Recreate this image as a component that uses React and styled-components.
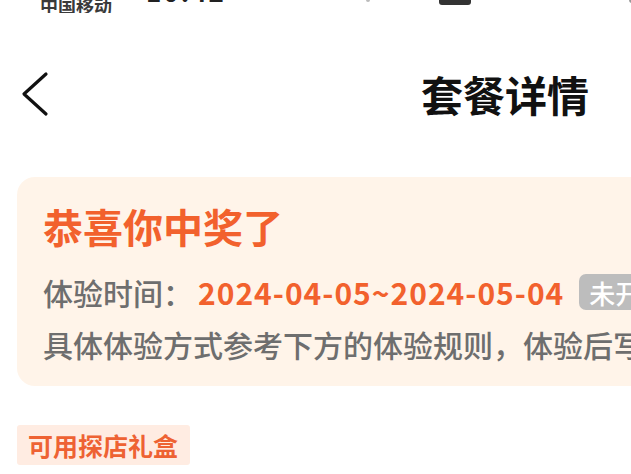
import React from "react";
import styled, { createGlobalStyle } from "styled-components";

const GlobalStyle = createGlobalStyle`
  html, body {
    margin: 0;
    padding: 0;
    background: #ffffff;
    overflow: hidden;
  }
  body {
    font-family: "Noto Sans CJK SC", "Noto Sans", sans-serif;
  }
`;

const Page = styled.div`
  width: 1010px;
  display: flex;
  flex-direction: column;
`;

const StatusBar = styled.div`
  height: 13px;
  overflow: hidden;
  display: flex;
  align-items: flex-end;
  padding-left: 40px;
`;

const Carrier = styled.span`
  font-size: 18px;
  line-height: 1;
  font-weight: 700;
  color: #3a3a3a;
  margin-bottom: -1px;
`;

const Clock = styled.span`
  font-size: 26px;
  line-height: 1;
  font-weight: 700;
  color: #222222;
  margin-left: 34px;
  padding-bottom: 9px;
  letter-spacing: 2px;
`;

const StatusIcon = styled.span`
  display: block;
  width: ${(p) => p.w}px;
  height: 20px;
  margin-left: ${(p) => p.gap}px;
  margin-bottom: ${(p) => p.lift}px;
  background: ${(p) => p.color};
  border-radius: 3px;
`;

const NavBar = styled.div`
  height: 162px;
  display: flex;
  align-items: center;
  padding-left: 20px;
`;

const BackButton = styled.div`
  width: 30px;
  height: 46px;
  display: flex;
  align-items: center;
`;

const NavTitle = styled.h1`
  flex: 1;
  margin: 0 50px 0 0;
  text-align: center;
  font-size: 42px;
  line-height: 1.2;
  font-weight: 700;
  color: #111111;
`;

const Card = styled.div`
  margin: 2px 17px 0;
  background: #fff4e9;
  border-radius: 18px;
  padding: 25px 26px 22px;
  display: flex;
  flex-direction: column;
`;

const CardTitle = styled.div`
  font-size: 40px;
  line-height: 48px;
  font-weight: 700;
  color: #f2612d;
`;

const InfoRow = styled.div`
  display: flex;
  align-items: center;
  height: 40px;
  margin-top: ${(p) => p.top}px;
  white-space: nowrap;
  font-size: 30px;
  font-weight: 500;
  color: #6e6e6e;
`;

const DateText = styled.span`
  margin-left: 5px;
  color: #f2612d;
  font-weight: 700;
  letter-spacing: 1px;
`;

const StatusBadge = styled.span`
  margin-left: 15px;
  height: 36px;
  display: flex;
  align-items: center;
  padding: 0 10px;
  background: #bdbdbd;
  border-radius: 7px;
  font-size: 26px;
  font-weight: 500;
  color: #ffffff;
`;

const Tag = styled.div`
  align-self: flex-start;
  margin: 39px 0 0 17px;
  height: 40px;
  padding: 0 12px 0 11px;
  display: flex;
  align-items: center;
  background: #ffece2;
  border-radius: 3px;
  font-size: 25px;
  font-weight: 700;
  color: #ee6233;
`;

const App = () => {
  return (
    <>
      <GlobalStyle />
      <Page>
        <StatusBar>
          <Carrier>中国移动</Carrier>
          <Clock>10:42</Clock>
          <StatusIcon w={4} gap={140} lift={11} color="#bbbbbb" />
          <StatusIcon w={32} gap={69} lift={8} color="#333333" />
          <StatusIcon w={20} gap={158} lift={10} color="#999999" />
        </StatusBar>
        <NavBar>
          <BackButton>
            <svg width="30" height="46" viewBox="0 0 30 46" fill="none">
              <polyline
                points="26,3 4,23 26,43"
                stroke="#111111"
                strokeWidth="3.2"
                strokeLinecap="round"
                strokeLinejoin="round"
              />
            </svg>
          </BackButton>
          <NavTitle>套餐详情</NavTitle>
        </NavBar>
        <Card>
          <CardTitle>恭喜你中奖了</CardTitle>
          <InfoRow top={22}>
            体验时间：<DateText>2024-04-05~2024-05-04</DateText>
            <StatusBadge>未开始</StatusBadge>
          </InfoRow>
          <InfoRow top={12}>
            具体体验方式参考下方的体验规则，体验后写点评即可
          </InfoRow>
        </Card>
        <Tag>可用探店礼盒</Tag>
      </Page>
    </>
  );
};

export default App;
